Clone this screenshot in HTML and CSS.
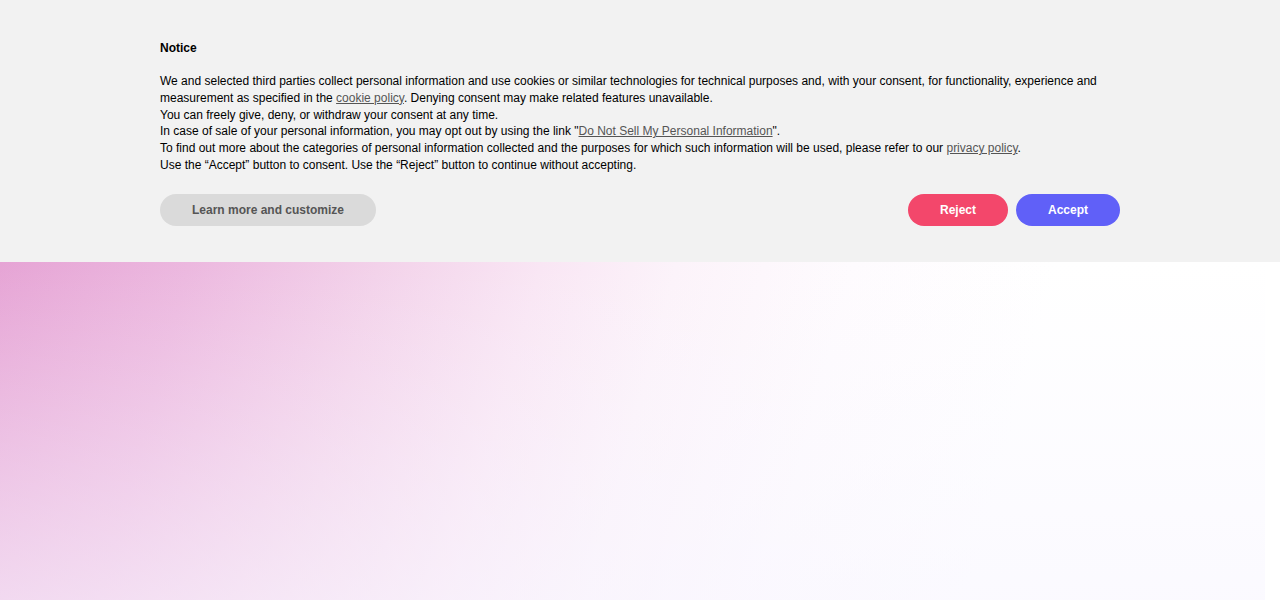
FILE: index.html
```html
<!DOCTYPE html>
<html lang="en">
<head>
    <meta charset="UTF-8">
    <meta name="viewport" content="width=device-width, initial-scale=1.0">
    <title>Notice</title>
    <link rel="stylesheet" href="styles.css">
</head>
<body>
    <div class="banner">
        <div class="banner-inner">
            <h2 class="title">Notice</h2>
            <div class="text">
                <p>We and selected third parties collect personal information and use cookies or similar technologies for technical purposes and, with your consent, for functionality, experience and measurement as specified in the <a href="#">cookie policy</a>. Denying consent may make related features unavailable.</p>
                <p>You can freely give, deny, or withdraw your consent at any time.</p>
                <p>In case of sale of your personal information, you may opt out by using the link "<a href="#">Do Not Sell My Personal Information</a>".</p>
                <p>To find out more about the categories of personal information collected and the purposes for which such information will be used, please refer to our <a href="#">privacy policy</a>.</p>
                <p>Use the “Accept” button to consent. Use the “Reject” button to continue without accepting.</p>
            </div>
            <div class="actions">
                <button class="btn btn-more">Learn more and customize</button>
                <div class="actions-right">
                    <button class="btn btn-reject">Reject</button>
                    <button class="btn btn-accept">Accept</button>
                </div>
            </div>
        </div>
    </div>
    <div class="hero"></div>
</body>
</html>
```

FILE: styles.css
```css
body {
    margin: 0;
    font-family: "Liberation Sans", Arial, sans-serif;
    background: #fff;
    height: 600px;
    overflow: hidden;
}
.banner {
    background: #f2f2f2;
    padding: 40px 0 36px;
}
.banner-inner {
    max-width: 960px;
    margin: 0 auto;
}
.title {
    margin: 0 0 17px;
    font-size: 12px;
    font-weight: bold;
    line-height: 16px;
    color: #000;
}
.text {
    font-size: 12px;
    line-height: 16.8px;
    color: #000;
}
.text p {
    margin: 0;
}
.text a {
    color: #555;
    text-decoration: underline;
}
.actions {
    display: flex;
    justify-content: space-between;
    align-items: center;
    margin-top: 20px;
}
.actions-right {
    display: flex;
    gap: 8px;
}
.btn {
    height: 32px;
    border: none;
    border-radius: 16px;
    font-family: "Liberation Sans", Arial, sans-serif;
    font-size: 12px;
    font-weight: bold;
    cursor: pointer;
    padding: 0;
}
.btn-more {
    width: 216px;
    background: #dadada;
    color: #555;
}
.btn-reject {
    width: 100px;
    background: #f3476b;
    color: #fff;
}
.btn-accept {
    width: 104px;
    background: #6060f8;
    color: #fff;
}
.hero {
    width: calc(100% - 15px);
    height: 338px;
    background:
        linear-gradient(180deg, rgba(248, 246, 255, 0) 0%, rgba(248, 246, 255, 0.6) 100%),
        linear-gradient(105deg, #e6a4d5 0%, #ecb8df 14%, #f3d2ea 28%, #f9e6f4 40%, #fcf3fa 50%, #fefbfe 63%, #fff 78%);
}
```
